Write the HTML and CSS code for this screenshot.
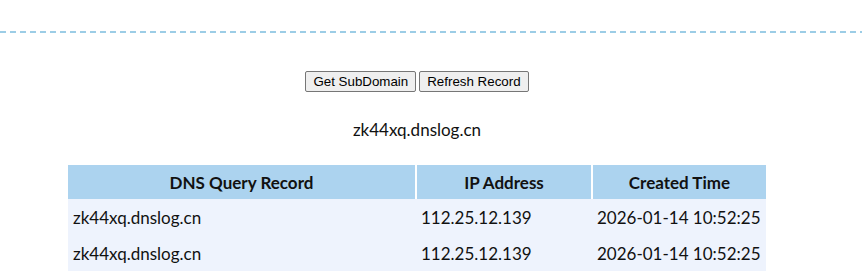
FILE: index.html
```html
<!DOCTYPE html>
<html>
<head>
<meta charset="utf-8">
<link rel="stylesheet" href="styles.css">
</head>
<body>
<div class="rule"></div>
<div class="page">
  <div class="actions">
    <button class="btn">Get SubDomain</button>
    <button class="btn">Refresh Record</button>
  </div>
  <div class="domain">zk44xq.dnslog.cn</div>
  <table class="records">
    <thead>
      <tr><th class="c1">DNS Query Record</th><th class="c2">IP Address</th><th class="c3">Created Time</th></tr>
    </thead>
    <tbody>
      <tr><td>zk44xq.dnslog.cn</td><td>112.25.12.139</td><td>2026-01-14 10:52:25</td></tr>
      <tr><td>zk44xq.dnslog.cn</td><td>112.25.12.139</td><td>2026-01-14 10:52:25</td></tr>
    </tbody>
  </table>
</div>
</body>
</html>
```
FILE: styles.css
```css
html, body {
  margin: 0;
  padding: 0;
  background: #ffffff;
}
body {
  font-family: Lato, "Noto Sans", sans-serif;
  color: #111;
}
.rule {
  margin-top: 31px;
  height: 2px;
  background: repeating-linear-gradient(to right, #9ccde6 0 6px, transparent 6px 10px);
}
.page {
  width: 834px;
}
.actions {
  margin-top: 38px;
  display: flex;
  justify-content: center;
  gap: 3px;
}
.btn {
  font-family: "Liberation Sans", Arial, sans-serif;
  font-size: 13.33px;
  margin: 0;
  height: 21px;
  padding: 1px 7px;
  color: #000;
  background: #efefef;
  border: 1px solid #767676;
  border-radius: 2px;
}
.domain {
  margin-top: 27px;
  text-align: center;
  font-size: 17px;
  line-height: 22px;
}
.records {
  margin: 24px auto 0;
  width: 698px;
  border-collapse: collapse;
  font-size: 17px;
}
.records th {
  background: #acd3ef;
  height: 34px;
  padding: 0;
  font-weight: 700;
  text-align: center;
  border-right: 2px solid #ffffff;
}
.records th:last-child { border-right: 0; }
.records .c1 { width: 347px; }
.records .c2 { width: 174px; }
.records td {
  background: #eef3fd;
  height: 36px;
  padding: 0 0 0 5px;
  text-align: left;
}
```
